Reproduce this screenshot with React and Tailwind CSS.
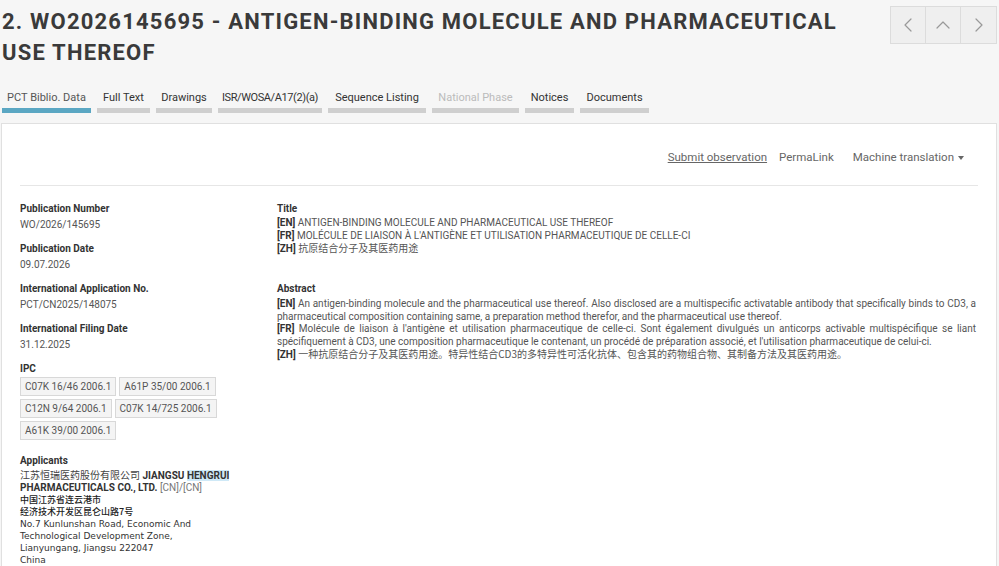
import { ChevronLeft, ChevronUp, ChevronRight } from 'lucide-react'

const tabs = [
  { label: 'PCT Biblio. Data', w: 'w-[89px]', active: true },
  { label: 'Full Text', w: 'w-[53px]' },
  { label: 'Drawings', w: 'w-[56px]' },
  { label: 'ISR/WOSA/A17(2)(a)', w: 'w-[104px]', tight: true },
  { label: 'Sequence Listing', w: 'w-[98px]' },
  { label: 'National Phase', w: 'w-[87px]', disabled: true },
  { label: 'Notices', w: 'w-[49px]' },
  { label: 'Documents', w: 'w-[69px]' },
]

const ipc = [
  ['C07K 16/46 2006.1', 'A61P 35/00 2006.1'],
  ['C12N 9/64 2006.1', 'C07K 14/725 2006.1'],
  ['A61K 39/00 2006.1'],
]

function Field({ label, children }) {
  return (
    <div className="mb-[11px]">
      <div className="font-bold text-[#333] text-[10px] leading-[13px] mb-[3px]">{label}</div>
      <div className="text-[#555] text-[10px] leading-[13px]">{children}</div>
    </div>
  )
}

export default function App() {
  return (
    <div className="min-h-screen bg-[#f6f6f6] font-['Roboto',sans-serif] text-[#444] overflow-hidden">
      {/* Header */}
      <div className="flex items-start justify-between pl-[2px] pr-[2px] pt-[6px]">
        <h1 className="text-[22px] leading-[31px] font-bold tracking-[1.2px] text-[#3a3a3a] w-[860px]">
          2. WO2026145695 - ANTIGEN-BINDING MOLECULE AND PHARMACEUTICAL USE THEREOF
        </h1>
        <div className="flex border border-[#dcdcdc] bg-[#efefef]">
          <button className="w-[35px] h-[36px] flex items-center justify-center text-[#999] border-r border-[#dcdcdc]">
            <ChevronLeft size={24} strokeWidth={1.2} />
          </button>
          <button className="w-[35px] h-[36px] flex items-center justify-center text-[#999] border-r border-[#dcdcdc]">
            <ChevronUp size={24} strokeWidth={1.2} />
          </button>
          <button className="w-[35px] h-[36px] flex items-center justify-center text-[#999]">
            <ChevronRight size={24} strokeWidth={1.2} />
          </button>
        </div>
      </div>

      {/* Tabs */}
      <div className="flex gap-[6px] pl-[2px] mt-[22px]">
        {tabs.map((t) => (
          <div key={t.label} className={'flex flex-col ' + t.w}>
            <span
              className={
                'text-center whitespace-nowrap text-[11px] leading-[15px] ' +
                (t.tight ? 'tracking-[-0.4px] ' : '') +
                (t.disabled ? 'text-[#bbb]' : t.active ? 'text-[#555]' : 'text-[#333]')
              }
            >
              {t.label}
            </span>
            <div className={'h-[5px] mt-[3px] ' + (t.active ? 'bg-[#5ba7c3]' : 'bg-[#cfcfcf]')} />
          </div>
        ))}
      </div>

      {/* Panel */}
      <div className="mt-[10px] ml-[1px] mr-[2px] bg-white border border-[#e0e0e0] min-h-[460px]">
        <div className="mx-[18px] border-b border-[#e6e6e6] flex justify-end items-center gap-[12px] pt-[25px] pb-[19px] pr-[14px] text-[11.5px] text-[#666]">
          <span className="underline">Submit observation</span>
          <span className="mr-[7px]">PermaLink</span>
          <span className="flex items-center gap-[4px]">
            Machine translation
            <span className="inline-block w-0 h-0 border-l-[3px] border-r-[3px] border-t-[4px] border-l-transparent border-r-transparent border-t-[#666]" />
          </span>
        </div>

        <div className="flex px-[18px] pt-[16px]">
          {/* Left column */}
          <div className="w-[257px] shrink-0">
            <Field label="Publication Number">WO/2026/145695</Field>
            <Field label="Publication Date">09.07.2026</Field>
            <Field label="International Application No.">PCT/CN2025/148075</Field>
            <Field label="International Filing Date">31.12.2025</Field>
            <div className="mb-[14px]">
              <div className="font-bold text-[#333] text-[10px] leading-[13px] mb-[2px]">IPC</div>
              <div className="flex flex-col gap-[3px]">
                {ipc.map((row, i) => (
                  <div key={i} className="flex gap-[3px]">
                    {row.map((c) => (
                      <span key={c} className="border border-[#d8d8d8] bg-[#f4f4f4] px-[4px] text-[10px] leading-[17px] text-[#555]">
                        {c}
                      </span>
                    ))}
                  </div>
                ))}
              </div>
            </div>
            <div className="font-bold text-[#333] text-[10px] leading-[13px] mb-[2px]">Applicants</div>
            <div className="text-[10px] leading-[12px] text-[#444]">
              <span className="font-['Noto_Sans_CJK_SC',sans-serif]">江苏恒瑞医药股份有限公司</span>{' '}
              <span className="font-bold text-[#333]">
                JIANGSU <span className="bg-[#cfe9f7]">HENGRUI</span> PHARMACEUTICALS CO., LTD.
              </span>{' '}
              <span className="text-[#777]">[CN]/[CN]</span>
            </div>
            <div className="text-[9px] leading-[12px] text-[#222] font-medium font-['Noto_Sans_CJK_SC',sans-serif]">
              <div>中国江苏省连云港市</div>
              <div>经济技术开发区昆仑山路7号</div>
            </div>
            <div className="text-[9px] leading-[12px] text-[#333] font-['DejaVu_Sans',sans-serif]">
              <div>No.7 Kunlunshan Road, Economic And</div>
              <div>Technological Development Zone,</div>
              <div>Lianyungang, Jiangsu 222047</div>
              <div>China</div>
            </div>
          </div>

          {/* Right column */}
          <div className="flex-1 pr-[2px]">
            <div className="font-bold text-[#333] text-[10px] leading-[13px] mb-[2px]">Title</div>
            <div className="text-[10px] leading-[12.5px] text-[#555]">
              <div><b className="text-[#333]">[EN]</b> ANTIGEN-BINDING MOLECULE AND PHARMACEUTICAL USE THEREOF</div>
              <div><b className="text-[#333]">[FR]</b> MOLÉCULE DE LIAISON À L'ANTIGÈNE ET UTILISATION PHARMACEUTIQUE DE CELLE-CI</div>
              <div><b className="text-[#333]">[ZH]</b> <span className="font-['Noto_Sans_CJK_SC',sans-serif]">抗原结合分子及其医药用途</span></div>
            </div>

            <div className="font-bold text-[#333] text-[10px] leading-[13px] mt-[26px] mb-[2px]">Abstract</div>
            <div className="text-[10px] leading-[13px] text-[#555] text-justify">
              <p><b className="text-[#333]">[EN]</b> An antigen-binding molecule and the pharmaceutical use thereof. Also disclosed are a multispecific activatable antibody that specifically binds to CD3, a pharmaceutical composition containing same, a preparation method therefor, and the pharmaceutical use thereof.</p>
              <p className="-mt-[1px]"><b className="text-[#333]">[FR]</b> Molécule de liaison à l'antigène et utilisation pharmaceutique de celle-ci. Sont également divulgués un anticorps activable multispécifique se liant spécifiquement à CD3, une composition pharmaceutique le contenant, un procédé de préparation associé, et l'utilisation pharmaceutique de celui-ci.</p>
              <p className="-mt-[1px]"><b className="text-[#333]">[ZH]</b> <span className="font-['Noto_Sans_CJK_SC',sans-serif]">一种抗原结合分子及其医药用途。特异性结合CD3的多特异性可活化抗体、包含其的药物组合物、其制备方法及其医药用途。</span></p>
            </div>
          </div>
        </div>
      </div>
    </div>
  )
}
